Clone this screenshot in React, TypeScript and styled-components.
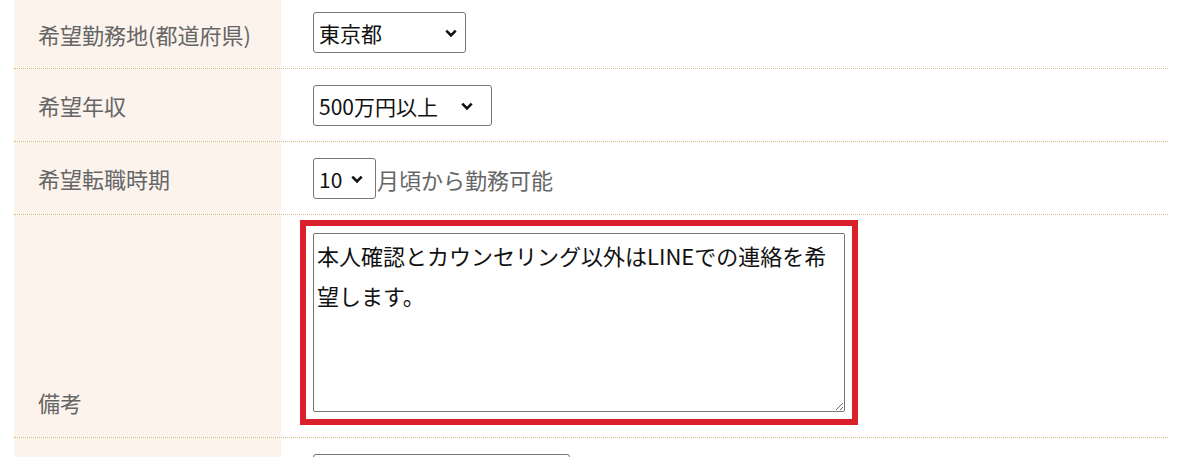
import styled, { createGlobalStyle } from "styled-components";

const GlobalStyle = createGlobalStyle`
  html, body {
    margin: 0;
    padding: 0;
    background: #ffffff;
  }
  body {
    font-family: "Noto Sans CJK JP", "Noto Sans", sans-serif;
  }
`;

const Form = styled.div`
  width: 1154px;
  margin-left: 14px;
`;

const Row = styled.div`
  display: grid;
  grid-template-columns: 267px 1fr;
  border-bottom: 1px dotted #d2bd8a;
`;

const Label = styled.div<{ $bottom?: boolean }>`
  background: #fbf3ec;
  padding: ${(p) => (p.$bottom ? "0 24px 20px" : "0 24px")};
  display: flex;
  align-items: ${(p) => (p.$bottom ? "flex-end" : "center")};
  font-size: 22px;
  line-height: 30px;
  color: #666666;
`;

const Field = styled.div<{ $top?: number; $bottom?: number; $left?: number }>`
  display: flex;
  align-items: center;
  gap: 1px;
  padding: ${(p) => p.$top ?? 16}px 0 ${(p) => p.$bottom ?? 15}px
    ${(p) => p.$left ?? 32}px;
`;

const SelectWrap = styled.div`
  position: relative;
  display: inline-flex;
`;

const Select = styled.select<{ $w: number }>`
  appearance: none;
  -webkit-appearance: none;
  width: ${(p) => p.$w}px;
  height: 41px;
  box-sizing: border-box;
  border: 1px solid #767676;
  border-radius: 3px;
  background: #ffffff;
  color: #111111;
  font-family: inherit;
  font-size: 21px;
  padding: 0 24px 0 5px;
  outline: none;
`;

const Chevron = styled.svg<{ $right: number }>`
  position: absolute;
  right: ${(p) => p.$right}px;
  top: 50%;
  margin-top: -4px;
  pointer-events: none;
`;

const Suffix = styled.span`
  font-size: 22px;
  color: #666666;
`;

const Highlight = styled.div`
  border: 6px solid #d9202b;
  padding: 7px;
  display: flex;
`;

const Memo = styled.textarea`
  width: 532px;
  height: 179px;
  box-sizing: border-box;
  border: 1px solid #767676;
  border-radius: 2px;
  padding: 1px 3px;
  font-family: inherit;
  font-size: 22px;
  line-height: 40px;
  color: #111111;
  resize: both;
  outline: none;
`;

function Dropdown({
  width,
  value,
  arrowRight = 9,
}: {
  width: number;
  value: string;
  arrowRight?: number;
}) {
  return (
    <SelectWrap>
      <Select $w={width} defaultValue={value}>
        <option value={value}>{value}</option>
      </Select>
      <Chevron $right={arrowRight} width="12" height="9" viewBox="0 0 12 9">
        <path d="M1.3 1.6 L6 6.3 L10.7 1.6" fill="none" stroke="#111" strokeWidth="2.6" />
      </Chevron>
    </SelectWrap>
  );
}

export default function App() {
  return (
    <>
      <GlobalStyle />
      <Form>
        <Row>
          <Label>希望勤務地(都道府県)</Label>
          <Field $top={12}>
            <Dropdown width={153} value="東京都" />
          </Field>
        </Row>
        <Row>
          <Label>希望年収</Label>
          <Field>
            <Dropdown width={179} value="500万円以上" arrowRight={19} />
          </Field>
        </Row>
        <Row>
          <Label>希望転職時期</Label>
          <Field>
            <Dropdown width={63} value="10" arrowRight={13} />
            <Suffix>月頃から勤務可能</Suffix>
          </Field>
        </Row>
        <Row>
          <Label $bottom>備考</Label>
          <Field $top={5} $bottom={12} $left={19}>
            <Highlight>
              <Memo defaultValue="本人確認とカウンセリング以外はLINEでの連絡を希望します。" />
            </Highlight>
          </Field>
        </Row>
        <Row>
          <Label>&nbsp;</Label>
          <Field>
            <Dropdown width={257} value="" />
          </Field>
        </Row>
      </Form>
    </>
  );
}
